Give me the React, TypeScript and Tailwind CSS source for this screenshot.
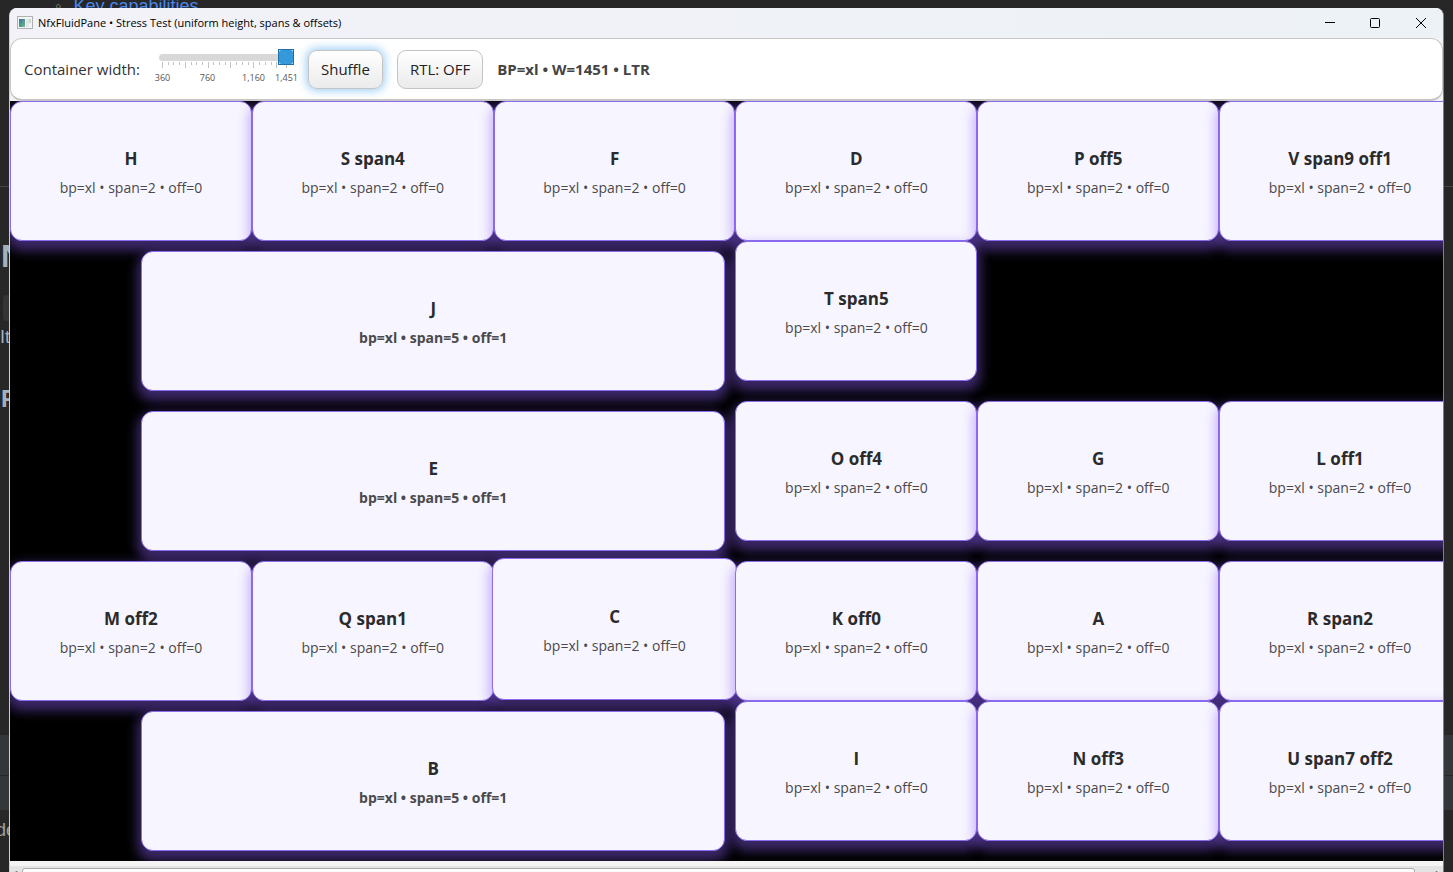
import React, { useState } from "react";

type Card = { title: string; span: 2 | 5; off: 0 | 1; raised?: boolean };

const initialCards: Card[] = [
  { title: "H", span: 2, off: 0 },
  { title: "S span4", span: 2, off: 0 },
  { title: "F", span: 2, off: 0 },
  { title: "D", span: 2, off: 0 },
  { title: "P off5", span: 2, off: 0 },
  { title: "V span9 off1", span: 2, off: 0 },
  { title: "J", span: 5, off: 1 },
  { title: "T span5", span: 2, off: 0 },
  { title: "E", span: 5, off: 1 },
  { title: "O off4", span: 2, off: 0 },
  { title: "G", span: 2, off: 0 },
  { title: "L off1", span: 2, off: 0 },
  { title: "M off2", span: 2, off: 0 },
  { title: "Q span1", span: 2, off: 0 },
  { title: "C", span: 2, off: 0, raised: true },
  { title: "K off0", span: 2, off: 0 },
  { title: "A", span: 2, off: 0 },
  { title: "R span2", span: 2, off: 0 },
  { title: "B", span: 5, off: 1 },
  { title: "I", span: 2, off: 0 },
  { title: "N off3", span: 2, off: 0 },
  { title: "U span7 off2", span: 2, off: 0 },
];

function FluidCard({ card }: { card: Card }) {
  const wide = card.span === 5;
  const place = wide
    ? "col-start-2 col-span-5 m-[10px] h-[140px]"
    : card.raised
      ? "col-span-2 -mx-[2px] -mt-[3px] h-[142px]"
      : "col-span-2 h-[140px]";
  return (
    <article
      className={`${place} flex flex-col items-center justify-center gap-[7px] rounded-[12px] border border-[#8b6cec] bg-[#f7f5ff] pt-[3px] shadow-[0_6px_11px_4px_rgba(139,92,246,0.42)]`}
    >
      <h2 className="text-[17px] leading-[24px] font-bold text-[#2b2b2b]">{card.title}</h2>
      <p className={`text-[14px] leading-[20px] text-[#4a4a4a] ${wide ? "font-bold" : ""}`}>
        bp=xl • span={card.span} • off={card.off}
      </p>
    </article>
  );
}

function Ticks() {
  const marks = [3, 9, 14, 20, 26, 32, 37, 43, 49, 54, 60, 66, 71, 77, 83, 89, 94, 100, 106, 112, 117, 123, 127];
  return (
    <svg className="-mt-[3px] block h-[6px] w-full" viewBox="0 0 135 6" aria-hidden="true">
      {marks.map((x, i) => (
        <path key={x} d={`M${x + 0.5} 0V${i % 4 === 0 || x === 127 ? 6 : 3}`} stroke="#c3c3c3" strokeWidth="1" />
      ))}
    </svg>
  );
}

function WidthSlider({ value, onChange }: { value: number; onChange: (v: number) => void }) {
  return (
    <div className="h-[40px] w-[135px]">
      <input
        id="container-width"
        type="range"
        min={360}
        max={1451}
        value={value}
        onChange={(e) => onChange(Number(e.target.value))}
        className="relative z-10 block h-4 w-full appearance-none bg-transparent outline-none [&::-webkit-slider-runnable-track]:h-[7px] [&::-webkit-slider-runnable-track]:rounded-full [&::-webkit-slider-runnable-track]:bg-[#d8d8d8] [&::-webkit-slider-thumb]:-mt-[5px] [&::-webkit-slider-thumb]:h-4 [&::-webkit-slider-thumb]:w-4 [&::-webkit-slider-thumb]:appearance-none [&::-webkit-slider-thumb]:border [&::-webkit-slider-thumb]:border-[#1f6fa8] [&::-webkit-slider-thumb]:bg-[radial-gradient(circle,#3498db_8px,#ffffff_10px)]"
      />
      <Ticks />
      <div className="mt-[5px] -ml-[19px] grid grid-cols-[45px_45px_47px_19px] justify-items-center text-[9px] leading-[10px] text-[#555]">
        <span>360</span>
        <span>760</span>
        <span>1,160</span>
        <span>1,451</span>
      </div>
    </div>
  );
}

function Backdrop() {
  return (
    <div aria-hidden="true">
      <div className="absolute -top-[7px] left-[55px] flex gap-3 font-['Liberation_Sans',sans-serif] text-[18px] leading-[26px] text-[#4a86e8]">
        <span className="text-[#8a8a8a]">◦</span>
        <span>Key capabilities</span>
      </div>
      <div className="absolute top-[186px] left-0 h-px w-full bg-[#454545]" />
      <div className="absolute top-[236px] left-[1px] font-['Liberation_Sans',sans-serif] text-[32px] leading-[40px] font-bold text-[#a3b1bf]">N</div>
      <div className="absolute top-[295px] left-[3px] h-[26px] w-5 rounded bg-[#353535]" />
      <div className="absolute top-[324px] left-0 font-['Liberation_Sans',sans-serif] text-[18px] leading-[26px] text-[#a3b1bf]">It</div>
      <div className="absolute top-[384px] left-px font-['Liberation_Sans',sans-serif] text-[24px] leading-[30px] font-bold text-[#a3b1bf]">F</div>
      <div className="absolute top-[735px] left-0 h-[75px] w-full bg-[#33373a]" />
      <div className="absolute top-[775px] left-0 h-px w-full bg-[#272727]" />
      <div className="absolute top-[817px] -left-[4px] font-['Liberation_Sans',sans-serif] text-[18px] leading-[26px] text-[#a0a0a0]">de</div>
    </div>
  );
}

function TitleBar() {
  return (
    <header className="flex h-[30px] items-center bg-linear-to-r from-[#f2f2f8] to-[#edf2f7] text-black">
      <svg className="ml-[7px] h-[14px] w-4" viewBox="0 0 16 14" aria-hidden="true">
        <defs>
          <linearGradient id="pane" x1="0" y1="0" x2="1" y2="1">
            <stop offset="0" stopColor="#3c6f9c" />
            <stop offset="1" stopColor="#6fbf86" />
          </linearGradient>
        </defs>
        <rect x="0.5" y="0.5" width="15" height="12" fill="#f4f6f6" stroke="#b0b3b5" />
        <rect x="2" y="3" width="6" height="8" fill="url(#pane)" />
        <rect x="9" y="3" width="3" height="8" fill="#e3e7ea" />
        <rect x="12" y="3" width="2" height="4" fill="#c3dccb" />
      </svg>
      <h1 className="ml-[5px] flex-1 text-[11px] leading-4">NfxFluidPane • Stress Test (uniform height, spans &amp; offsets)</h1>
      <button type="button" aria-label="Minimize" className="flex h-full w-[45px] items-center justify-center">
        <svg className="h-[10px] w-[10px]" viewBox="0 0 10 10"><path d="M0 4.5H10" stroke="#000" /></svg>
      </button>
      <button type="button" aria-label="Maximize" className="flex h-full w-[46px] items-center justify-center">
        <svg className="h-[10px] w-[10px]" viewBox="0 0 10 10"><rect x="0.5" y="0.5" width="9" height="9" rx="1" fill="none" stroke="#000" /></svg>
      </button>
      <button type="button" aria-label="Close" className="flex h-full w-[45px] items-center justify-center">
        <svg className="h-[10px] w-[10px]" viewBox="0 0 10 10"><path d="M0 0L10 10M10 0L0 10" stroke="#000" /></svg>
      </button>
    </header>
  );
}

const buttonBase =
  "h-[39px] rounded-[9px] border border-[#c4c4c4] bg-linear-to-b from-white to-[#ebebeb] px-3 text-[15px] text-[#222]";

export default function App() {
  const [cards, setCards] = useState(initialCards);
  const [rtl, setRtl] = useState(false);
  const [width, setWidth] = useState(1451);
  const shuffle = () => setCards([...cards].sort(() => Math.random() - 0.5));

  return (
    <div className="relative h-screen overflow-hidden bg-[#272727] font-['Open_Sans','Noto_Sans',sans-serif]">
      <Backdrop />
      <main className="relative mx-[9px] mt-2 overflow-hidden rounded-t-lg border-x border-l-[#cfcfcf] border-r-[#808080] bg-[#f4f4f4]">
        <TitleBar />
        <div className="flex h-[63px] items-center gap-[14px] rounded-[12px] border border-b-2 border-[#c6c6c6] bg-white px-[13px]">
          <label htmlFor="container-width" className="w-[121px] text-[15px] whitespace-nowrap text-[#333]">
            Container width:
          </label>
          <WidthSlider value={width} onChange={setWidth} />
          <button type="button" onClick={shuffle} className={`${buttonBase} shadow-[0_0_8px_2px_rgba(120,190,245,0.7)]`}>
            Shuffle
          </button>
          <button type="button" onClick={() => setRtl(!rtl)} className={buttonBase}>
            RTL: {rtl ? "ON" : "OFF"}
          </button>
          <output className="text-[15px] font-bold text-[#444]">
            BP=xl • W={width} • {rtl ? "RTL" : "LTR"}
          </output>
        </div>
        <section className="overflow-hidden bg-black" dir={rtl ? "rtl" : "ltr"}>
          <div className="grid grid-cols-12 items-start" style={{ width }}>
            {cards.map((card) => (
              <FluidCard key={card.title} card={card} />
            ))}
          </div>
        </section>
        <div className="flex h-6 items-end border-t-[5px] border-[#f4f4f4] bg-[#e4e4e4]" aria-hidden="true">
          <div className="flex h-[18px] w-full items-center gap-1 px-[2px]">
            <svg className="h-[10px] w-[6px]" viewBox="0 0 6 10"><path d="M5 0L1 5L5 10" fill="none" stroke="#777" strokeWidth="1.5" /></svg>
            <div className="h-4 flex-1 rounded-[3px] border border-[#a9a9a9] bg-linear-to-b from-white to-[#e8e8e8]" />
            <svg className="ml-4 h-[10px] w-[6px]" viewBox="0 0 6 10"><path d="M1 0L5 5L1 10" fill="none" stroke="#777" strokeWidth="1.5" /></svg>
          </div>
        </div>
      </main>
    </div>
  );
}
